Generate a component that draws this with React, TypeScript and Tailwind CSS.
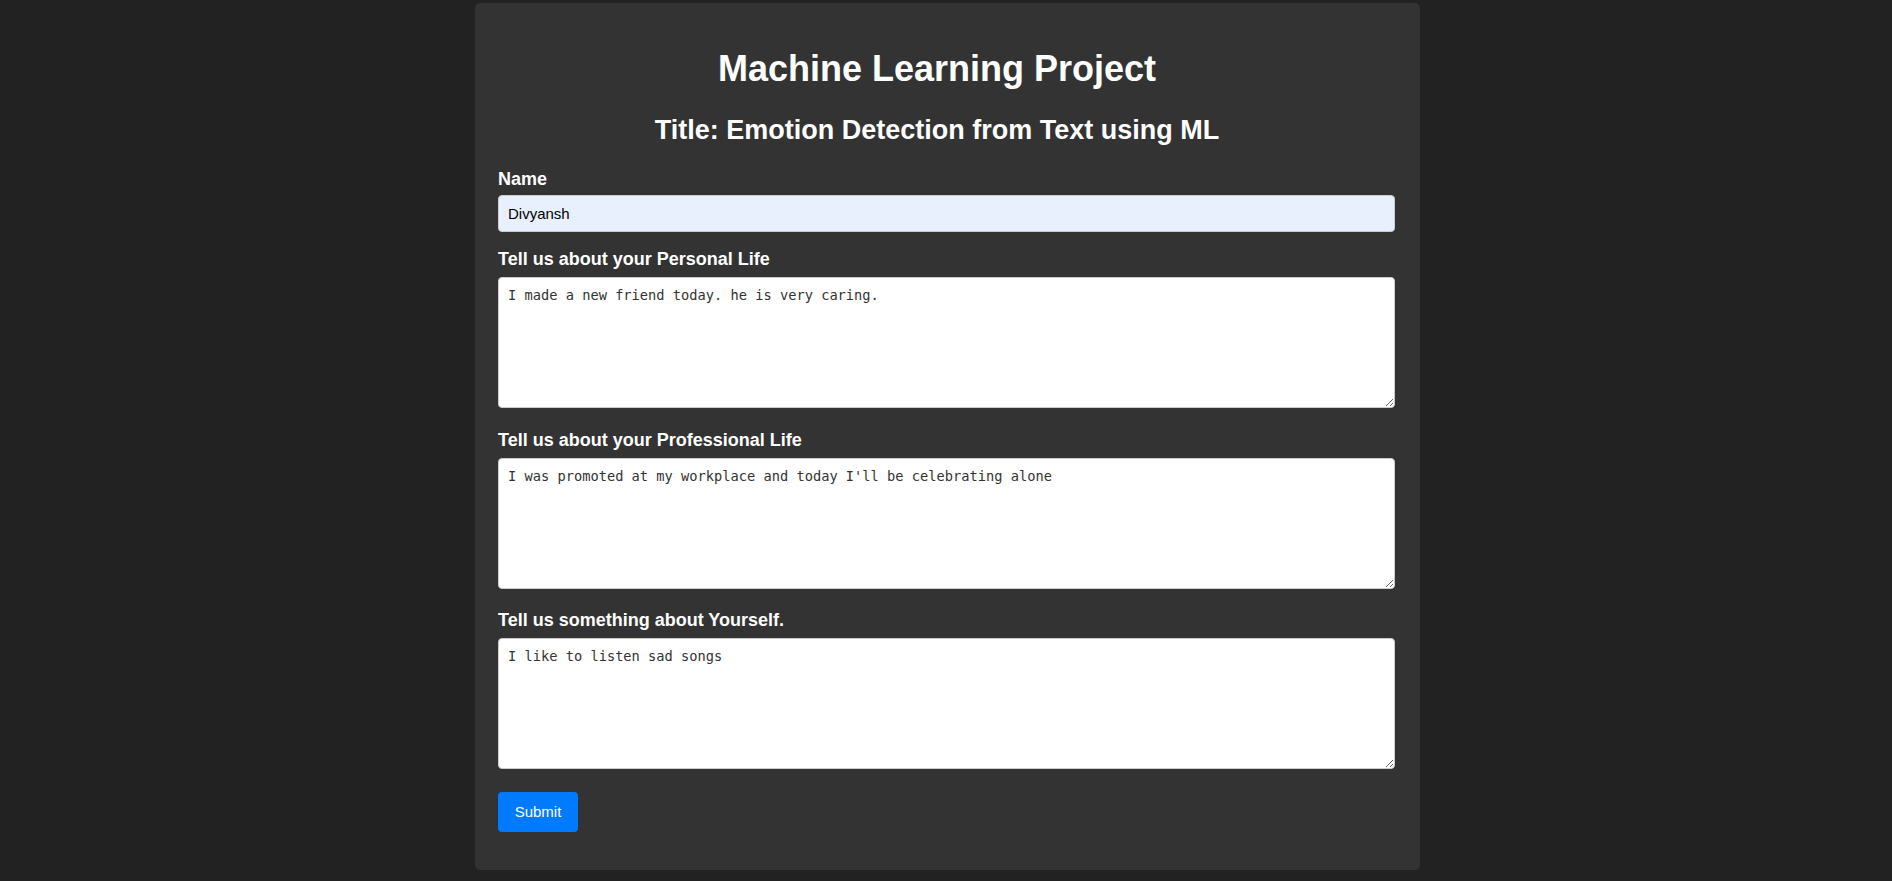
import React from 'react';

const fields = [
  { id: 'personal', label: 'Tell us about your Personal Life', value: 'I made a new friend today. he is very caring.', gap: 'mt-[17px]' },
  { id: 'professional', label: 'Tell us about your Professional Life', value: "I was promoted at my workplace and today I'll be celebrating alone", gap: 'mt-[22px]' },
  { id: 'yourself', label: 'Tell us something about Yourself.', value: 'I like to listen sad songs', gap: 'mt-[21px]' },
];

const App = () => {
  return (
    <div className="min-h-screen bg-[#222222] pt-[3px] pl-[3px] font-['Liberation_Sans',Arial,sans-serif] text-white">
      <div className="mx-auto w-[945px] rounded-[5px] bg-[#333333] pl-[23px] pr-[44px] pt-[45px] pb-[38px]">
        {/* Headings */}
        <h1 className="text-center text-[36px] font-bold leading-[41px]">Machine Learning Project</h1>
        <h2 className="mt-[26px] text-center text-[27px] font-bold leading-[31px]">
          Title: Emotion Detection from Text using ML
        </h2>

        {/* Form */}
        <form className="mt-[23px] flex flex-col items-start" onSubmit={(e) => e.preventDefault()}>
          <label htmlFor="name" className="block text-[18px] font-bold leading-[21px] mb-[5px]">
            Name
          </label>
          <input
            id="name"
            type="text"
            defaultValue="Divyansh"
            className="block h-[37px] w-[897px] rounded-[4px] border border-[#cccccc] bg-[#e8f0fe] px-[9px] text-[15px] text-black outline-none"
          />

          {fields.map((f) => (
            <React.Fragment key={f.id}>
              <label htmlFor={f.id} className={`block text-[18px] font-bold leading-[21px] mb-[7px] ${f.gap}`}>
                {f.label}
              </label>
              <textarea
                id={f.id}
                defaultValue={f.value}
                className="block h-[131px] w-[897px] rounded-[4px] border border-[#cccccc] bg-white p-[9px] font-['DejaVu_Sans_Mono',monospace] text-[13.7px] leading-[16px] text-[#333333] outline-none"
              />
            </React.Fragment>
          ))}

          <button
            type="submit"
            className="mt-[23px] h-[40px] w-[80px] rounded-[4px] bg-[#007bff] text-[15px] text-white"
          >
            Submit
          </button>
        </form>
      </div>
    </div>
  );
};

export default App;
